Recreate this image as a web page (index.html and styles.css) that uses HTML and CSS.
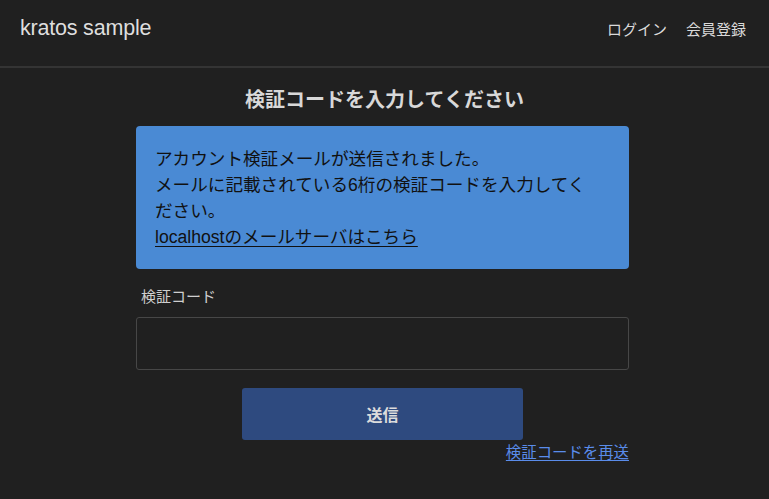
FILE: index.html
```html
<!DOCTYPE html>
<html lang="ja">
<head>
<meta charset="utf-8">
<title>kratos sample</title>
<link rel="stylesheet" href="styles.css">
</head>
<body>
<header class="header">
  <a class="brand" href="#">kratos sample</a>
  <nav class="nav">
    <a class="nav-link" href="#">ログイン</a>
    <a class="nav-link" href="#">会員登録</a>
  </nav>
</header>
<main class="main">
  <h1 class="title">検証コードを入力してください</h1>
  <div class="form">
    <div class="alert">
      <p class="alert-text">アカウント検証メールが送信されました。<br>メールに記載されている6桁の検証コードを入力してください。</p>
      <a class="alert-link" href="#">localhostのメールサーバはこちら</a>
    </div>
    <label class="label" for="code">検証コード</label>
    <input class="input" id="code" type="text">
    <button class="button" type="submit">送信</button>
    <div class="resend-row"><a class="resend" href="#">検証コードを再送</a></div>
  </div>
</main>
</body>
</html>
```

FILE: styles.css
```css
* { box-sizing: border-box; }

body {
  margin: 0;
  background: #202020;
  color: #dcdcdc;
  font-family: "Liberation Sans", "Noto Sans CJK JP", sans-serif;
}

a { text-decoration: none; color: inherit; }

.header {
  height: 68px;
  display: flex;
  align-items: center;
  justify-content: space-between;
  padding: 0 23px 10px 20px;
  border-bottom: 2px solid #343434;
}

.brand {
  font-size: 21.5px;
  color: #dedede;
  letter-spacing: -0.2px;
}

.nav {
  display: flex;
  gap: 19px;
}

.nav-link {
  font-size: 15px;
  color: #dadada;
}

.main {
  display: flex;
  flex-direction: column;
  align-items: center;
}

.title {
  margin: 18px 0 0;
  font-size: 20px;
  line-height: 28px;
  font-weight: bold;
  color: #d8d8d8;
}

.form {
  width: 493px;
  margin: 12px 4px 0 0;
  display: flex;
  flex-direction: column;
}

.alert {
  background: #4a8ad4;
  border-radius: 4px;
  padding: 20px 40px 19px 19px;
  color: #111;
  font-size: 17.6px;
  line-height: 26px;
}

.alert-text { margin: 0; }

.alert-link {
  color: #111;
  text-decoration: underline;
  text-underline-offset: 3px;
}

.label {
  margin: 17px 0 0 5px;
  font-size: 15px;
  line-height: 22px;
  color: #cfcfcf;
}

.input {
  margin-top: 9px;
  height: 53px;
  background: #202020;
  border: 1px solid #474747;
  border-radius: 3px;
  color: #ddd;
  font-size: 16px;
  padding: 0 12px;
}

.button {
  align-self: center;
  margin-top: 18px;
  width: 281px;
  height: 52px;
  background: #2e4a7f;
  border: none;
  border-radius: 3px;
  color: #dcdcdc;
  font-family: "Liberation Sans", "Noto Sans CJK JP", sans-serif;
  font-size: 16px;
  font-weight: bold;
}

.resend-row {
  display: flex;
  justify-content: flex-end;
  margin-top: 2px;
}

.resend {
  font-size: 15.4px;
  line-height: 22px;
  color: #5a8cea;
  text-decoration: underline;
  text-underline-offset: 2px;
}
```
